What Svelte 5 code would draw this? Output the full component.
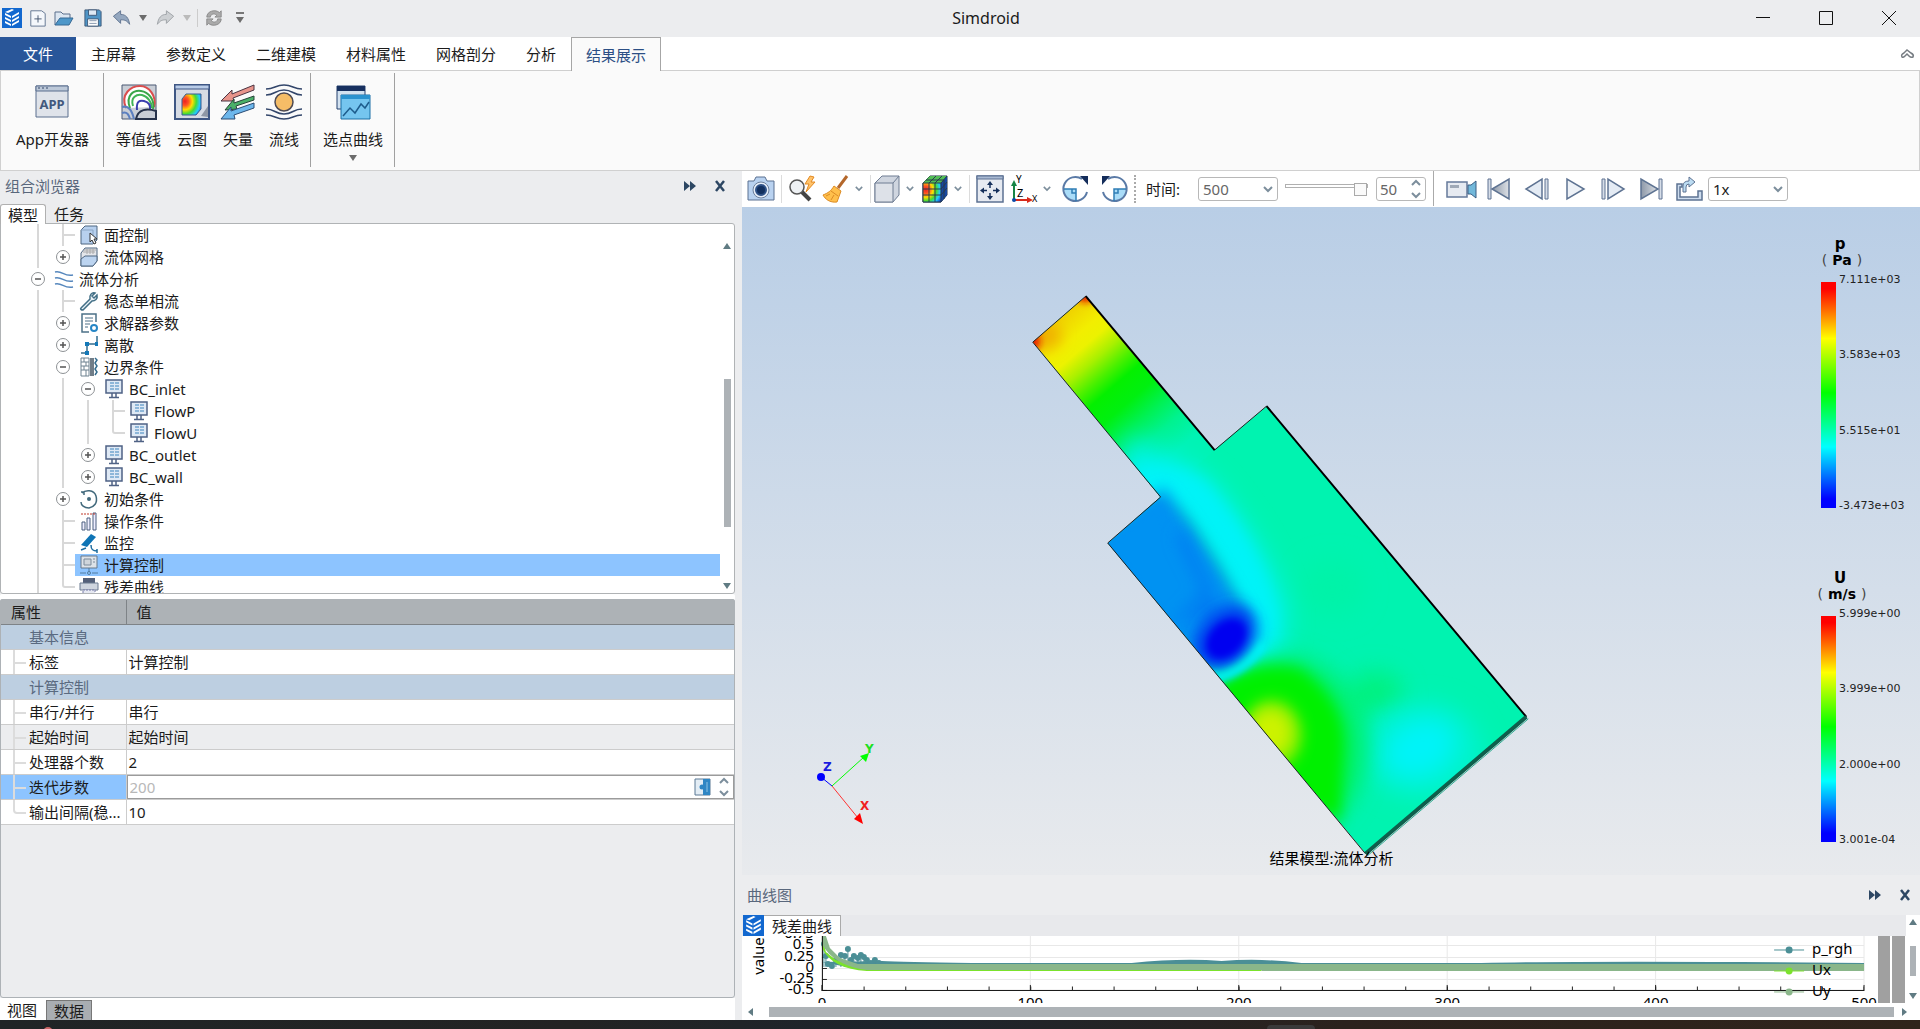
<script>
  const icons = {
    app: `<rect width="20" height="20" fill="#1268cf"/><path d="M3 5l6 3v2L3 7zM3 9l6 3v2l-6-3zM3 13l6 3v2l-6-3zM10 8l7-4v2l-7 4zM10 12l7-4v2l-7 4zM10 16l7-4v2l-7 4zM3 4l7-3 2 1-6 3z" fill="#fff"/>`,
    file: `<path d="M2 2h12l4 3v14H2z" fill="#f4f7fb" stroke="#5b6f8c"/><path d="M10 7v8M6 11h8" stroke="#3c4e69"/>`,
    open: `<path d="M1 17V4h6l2 2h7v4" fill="#dce6f1" stroke="#5b6f8c"/><path d="M1 17l5-7h13l-4 7z" fill="#4d97c9" stroke="#386a95"/>`,
    save: `<path d="M1 1h16l2 2v16H1z" fill="#4f95c6" stroke="#3b5675"/><path d="M5 1h9v6H5z" fill="#dfeaf4" stroke="#3b5675"/><path d="M4 11h12v8H4z" fill="#fff" stroke="#3b5675"/><path d="M6 13h8M6 16h8" stroke="#7d90a8"/>`,
    undo: `<path d="M1 8l8-6v4c6 0 9 4 10 11-3-4-5-5-10-5v4z" fill="#94a7bf" stroke="#5b6f8c"/>`,
    redo: `<path d="M19 8l-8-6v4C5 6 2 10 1 17c3-4 5-5 10-5v4z" fill="#cdd0d3" stroke="#9a9ea3"/>`,
    refresh: `<path d="M2 9c0-7 10-9 14-5l2-2v7h-7l2-2c-3-3-7-1-7 2zM18 11c0 7-10 9-14 5l-2 2v-7h7l-2 2c3 3 7 1 7-2z" fill="#aaa" stroke="#888"/>`,
    more: `<path d="M1 1h8" stroke="#777" stroke-width="2"/><path d="M1 5h8l-4 6z" fill="#6c6c6c"/>`,
    appdev: `<path d="M2 2h32v31H2z" fill="#dfe3ea" stroke="#5a6e8e"/><path d="M2 2h32v5H2z" fill="#bcc8d8" stroke="#5a6e8e"/><path d="M4 4h2M8 4h2M12 4h2" stroke="#34486a"/><text x="18" y="25" text-anchor="middle" font-size="13" font-weight="700" fill="#42597d">APP</text>`,
    contour: `<path d="M1 1h34v34H1z" fill="#c9ced6" stroke="#4a5972"/><g fill="none" stroke-width="2"><path d="M5 24C-1 10 10 2 19 2s17 10 14 21" stroke="#db4d4d" fill="#fff"/><path d="M9 24C4 11 13 6 20 7s14 8 12 18" stroke="#3aa648"/><path d="M12 22C9 13 16 10 21 11s10 7 10 13" stroke="#41b455"/><path d="M16 26c-1-9 3-10 7-9s7 3 6 9" stroke="#3a3fae"/><path d="M1 23c7-2 10 4 12 12M1 29c5-2 7 2 8 6" stroke="#5b7fc0"/><path d="M15 35c2-10 11-11 20-8v8z" fill="#c9ced6" stroke="#26324a"/></g>`,
    cloud: `<path d="M1 1h34v34H1z" fill="#d6dbe4" stroke="#3f5784" stroke-width="2"/><path d="M1 1h34v4H1z" fill="#b9cce8" stroke="#3f5784"/><path d="M27 32l7-10v11z" fill="#8f97a5"/><path d="M8 15l4-5h15v15l-5 6H8z" fill="url(#heat)" stroke="#3a5d90"/>`,
    vector: `<path d="M1 17 12 6v4L34 1v5L13 14l1 3z" fill="#e8948b" stroke="#4b3442"/><path d="M5 26l9-11v4l20-7v4L16 22l1 3z" fill="#49b069" stroke="#28443a"/><path d="M1 35l10-12v4l23-8v5L14 31l1 4z" fill="#6db7ec" stroke="#2d4d75"/>`,
    stream: `<g fill="none" stroke="#33466b" stroke-width="1.5"><path d="M0 5c9 0 9-4 18-4s9 4 18 4M0 11c9 0 9-5 18-5s9 5 18 5M0 25c9 0 9 5 18 5s9-5 18-5M0 31c9 0 9 4 18 4s9-4 18-4"/></g><circle cx="18" cy="18" r="9" fill="#f5bd67" stroke="#4e4a52" stroke-width="1.5"/>`,
    curve: `<path d="M2 2h28v23H2z" fill="#d3e2f0" stroke="#24406e"/><path d="M2 2h28v5H2z" fill="#17305f"/><path d="M6 11h29v24H6z" fill="#75c5ef" stroke="#1b6fa5"/><path d="M6 11h29v4H6z" fill="#2b93cf"/><path d="M8 32l7-8 5 5 6-9 4 4 4-6" fill="none" stroke="#1d5b8b" stroke-width="1.5"/>`,
    face: `<path d="M2 5 6 1h12v14l-4 4H2z" fill="#b7d0ee" stroke="#4f6680"/><path d="M2 5h12v14" fill="none" stroke="#8ba5c4"/><path d="M11 8v9l2-2 2 4 2-1-2-4h3z" fill="#fff" stroke="#333"/>`,
    mesh: `<path d="M2 6 6 1h12v13l-4 5H2z" fill="#e4e6ea" stroke="#4f6680"/><path d="M2 12l4-3h12v5l-4 5H2z" fill="#bcd4f0" stroke="#4f6680"/><path d="M4 5h12M5 3h12M8 2v5M11 2v5M14 2v5" stroke="#aaa"/>`,
    flow: `<path d="M1 3c7-2 9 5 18 3M1 9c7-2 9 5 18 3M1 15c7-2 9 5 18 3" fill="none" stroke="#5687bd" stroke-width="1.5"/>`,
    wrench: `<path d="M2 17 11 8c-1-4 2-7 5-6l-3 3 2 2 3-3c1 4-2 6-5 6l-9 9c-2 0-3-1-2-2z" fill="#e9f1f6" stroke="#426f86" stroke-width="1.5"/>`,
    solver: `<path d="M17 9V1H3v18h7" fill="#fff" stroke="#4c7188" stroke-width="1.5"/><path d="M6 5h8M6 8h8M6 11h5M6 14h3" stroke="#4c7188"/><circle cx="15" cy="15" r="3" fill="#fff" stroke="#2686c6" stroke-width="2"/>`,
    discrete: `<path d="M2 18h6V9h10V1" fill="none" stroke="#336c8e" stroke-width="1.5"/><path d="M6 16h4v4H6zM6 7h4v4H6zM16 7h3v4h-3z" fill="#1579b8"/>`,
    boundary: `<path d="M2 1h8v18H2zM2 5h8M2 9h8M2 13h8M5 1v4M7 5v4M5 9v4M7 13v6" fill="none" stroke="#6f8290"/><path d="M11 1h4v18h-4z" fill="#707d88"/><path d="M16 1l2 2-2 3 2 3-2 3 2 3-2 3" fill="none" stroke="#336c8e" stroke-width="1.5"/>`,
    bc: `<path d="M2 1h16v13H2z" fill="#dfe9f5" stroke="#4f6285" stroke-width="1.5"/><path d="M7 3v9M9 3v9M12 3v9M14 3v9" stroke="#3d84bd" stroke-dasharray="2 1"/><path d="M8 14v4M12 14v4M5 18.5h10" stroke="#4f6285" stroke-width="1.5"/>`,
    initial: `<path d="M3 4C6 1 15 0 17 7s-2 11-7 12c-5 0-8-3-8-6M2 3l3 0 0 3" fill="none" stroke="#42697c" stroke-width="1.5"/><circle cx="10" cy="10" r="2" fill="#42697c"/>`,
    operate: `<path d="M3 11h3v8H3zM8 7h3v12H8zM14 2h3v17h-3z" fill="#eef" stroke="#4b5f7e"/><path d="M2 3h14" stroke="#c0392b" stroke-dasharray="2 1"/>`,
    monitor: `<path d="M2 12 12 1l5 3-9 10z" fill="#0e74b5"/><path d="M2 17l5-2M12 12c0 5 2 6 6 6M18 16v4" fill="none" stroke="#1d6c9f" stroke-width="1.5"/>`,
    compute: `<path d="M2 1h16v12H2z" fill="#dde2e8" stroke="#66788b"/><path d="M5 4h7v6H5zM14 4h2M14 7h2" fill="#cfd5db" stroke="#7c8b9a"/><path d="M10 13v4M1 18h6M13 18h6" stroke="#527d9f"/><circle cx="10" cy="18" r="1.5" fill="none" stroke="#527d9f"/>`,
    residual: `<path d="M4 1h12v5H4z" fill="#536079"/><path d="M1 6h18v7H1z" fill="#cfd6df" stroke="#6b7a90"/><path d="M4 13h12v6H4z" fill="#e6e9f2" stroke="#777ba8" stroke-dasharray="2 1"/>`,
    camera: `<path d="M1 6h6l2-4h9l2 4h7v19H1z" fill="#b9d2f0" stroke="#5b7191"/><circle cx="14" cy="15" r="8" fill="#e6eef8" stroke="#6d809c"/><circle cx="14" cy="15" r="5" fill="#12305f" stroke="#2e5187" stroke-width="2"/>`,
    zoom: `<path d="M14 17l8 8" stroke="#444" stroke-width="4"/><circle cx="9" cy="12" r="7" fill="#eef1f4" stroke="#555" stroke-width="1.5"/><path d="M22 1l-5 8h4l-3 8 9-10h-4l3-5z" fill="#ffc36b" stroke="#e38a22"/>`,
    broom: `<path d="M25 1 16 13" stroke="#b4672b" stroke-width="3"/><path d="M12 11l7 5-4 11C8 28 3 24 1 20c5-2 8-4 11-9z" fill="#ffbf4b" stroke="#dc8b24"/><path d="M9 16l7 5M4 21l4-2M9 25l3-5" stroke="#dc8b24"/>`,
    cube: `<path d="M2 8 9 1h17v19l-6 7H2z" fill="#cfd5df" stroke="#6e7c92"/><path d="M2 8h18v19H2z" fill="#dde1e8" stroke="#6e7c92"/><path d="M20 8l6-7" stroke="#6e7c92"/>`,
    colorcube: `<path d="M2 8 9 1h17v19l-6 7H2z" fill="#126fc7" stroke="#234"/><path d="M2 8h18v19H2z" fill="url(#heat)"/><path d="M2 8 9 1h17l-6 7z" fill="#52bd55"/><path d="M20 8l6-7v19l-6 7z" fill="#17479f"/><path d="M2 8h18v19H2zM2 14h18M2 20h18M8 8v19M14 8v19M8 8l7-7M14 8l7-7M5 5h18M20 8l6-7M20 14l6-7M20 20l6-7M23 5v19" fill="none" stroke="#273b4d"/>`,
    fit: `<path d="M1 1h26v26H1z" fill="#e6eaf1" stroke="#5c7192" stroke-width="1.5"/><path d="M1 1h26v3H1z" fill="#a9bad3" stroke="#5c7192"/><path d="M14 9v4M14 18v4M7 15.5h4M17 15.5h4" stroke="#16305c" stroke-width="1.5"/><path d="M11 10l3-4 3 4zM11 21l3 4 3-4zM8 12.5l-4 3 4 3zM20 12.5l4 3-4 3z" fill="#16305c"/>`,
    axes: `<path d="M4 25V9" stroke="#178545" stroke-width="2"/><path d="M1 11l3-6 3 6z" fill="#178545"/><path d="M4 25h15" stroke="#d92b1c" stroke-width="2"/><path d="M17 22l6 3-6 3z" fill="#d92b1c"/><circle cx="4" cy="25" r="2" fill="#0b4aa8"/><text x="6" y="8" font-size="10">Y</text><text x="7" y="22" font-size="11">Z</text><text x="22" y="27" font-size="9">X</text>`,
    cw: `<path d="M14 14H2a12 12 0 0 0 12 12z" fill="#a9dcf8"/><path d="M25 17A12 12 0 1 1 20 4" fill="none" stroke="#5a7aa6" stroke-width="2"/><path d="M2 14h12v12M10 14v4h4" fill="none" stroke="#2f7db5" stroke-width="1.5"/><path d="M18 1l8 0v9z" fill="#142d5b"/>`,
    ccw: `<path d="M14 14h12a12 12 0 0 1-12 12z" fill="#a9dcf8"/><path d="M3 17A12 12 0 1 0 8 4" fill="none" stroke="#5a7aa6" stroke-width="2"/><path d="M26 14H14v12M18 14v4h-4" fill="none" stroke="#2f7db5" stroke-width="1.5"/><path d="M10 1 2 1v9z" fill="#142d5b"/>`,
    video: `<path d="M0 7h20v15H0z" fill="#e6eaf1" stroke="#667a9a" stroke-width="1.5"/><path d="M3 10h9v3H3z" fill="#9fa9b7"/><path d="M21 10h3l5-4v17l-5-4h-3z" fill="#72b8da" stroke="#3a5e84"/>`,
    first: `<path d="M3 4h3v20H3z" fill="#d6dde8" stroke="#5e7392"/><path d="M24 4v20L7 14z" fill="url(#steel)" stroke="#5e7392" stroke-width="1.5"/>`,
    prev: `<path d="M19 4v20L3 14z" fill="#e4ebf4" stroke="#5e7392" stroke-width="1.5"/><path d="M22 4h3v20h-3z" fill="#d6dde8" stroke="#5e7392"/>`,
    play: `<path d="M6 4v20L23 14z" fill="#eef2f7" stroke="#5e7392" stroke-width="1.5"/>`,
    next: `<path d="M9 4v20L25 14z" fill="#e4ebf4" stroke="#5e7392" stroke-width="1.5"/><path d="M3 4h3v20H3z" fill="#d6dde8" stroke="#5e7392"/>`,
    last: `<path d="M22 4h3v20h-3z" fill="#d6dde8" stroke="#5e7392"/><path d="M4 4v20L21 14z" fill="url(#steel)" stroke="#5e7392" stroke-width="1.5"/>`,
    loop: `<path d="M2 9h5v3H5v10h18v-6h4v9H2z" fill="#cddcee" stroke="#5e7392" stroke-width="1.5"/><path d="M8 17V11q0-5 6-5V2l6 5-6 5V9q-3 0-3 3v5z" fill="#bcdcf2" stroke="#5e7392"/>`,
    forward: `<path d="M1 1l6 5-6 5zM7 1l6 5-6 5z" fill="#2d4763"/>`,
    close: `<path d="M2 1l8 10M10 1 2 11" stroke="#2d4763" stroke-width="2.5"/>`,
    chevron: `<path d="M1 1l4 4 4-4" fill="none" stroke="#7c8e9c" stroke-width="2"/>`,
    chevronUp: `<path d="M1 5l4-4 4 4" fill="none" stroke="#7c8e9c" stroke-width="2"/>`,
    up: `<path d="M0 6l4-6 4 6z" fill="#607b83"/>`,
    down: `<path d="M0 0l4 6 4-6z" fill="#607b83"/>`,
    left: `<path d="M6 0v8L1 4z" fill="#607b83"/>`,
    right: `<path d="M0 0v8l5-4z" fill="#607b83"/>`,
    minimize: `<path d="M0 6.5h14" stroke="#111"/>`,
    maximize: `<path d="M.5.5h13v13H.5z" fill="none" stroke="#111"/>`,
    quit: `<path d="M0 0l14 14M14 0 0 14" stroke="#111"/>`,
    collapse: `<path d="M1 9c-1-2 0-3 2-4l3-3 4 3c2 1 3 2 2 4-2 1-3 0-4-1L6 6 4 8C3 9 2 10 1 9z" fill="none" stroke="#777d83" stroke-width="1.5"/>`,
    param: `<path d="M1 1h15v16H1z" fill="#e3edf5" stroke="#5a7894"/><path d="M9 1h7v16H9z" fill="#2f86c4"/><circle cx="8" cy="9" r="2.5" fill="#2f86c4"/><path d="M13 4v10" stroke="#8cc3e6"/>`
  };

  const tabs = ['主屏幕', '参数定义', '二维建模', '材料属性', '网格剖分', '分析', '结果展示'];

  // guides: | line, t branch, l last branch, + closed, - open
  const tree = [
    { guides: '|t', icon: 'face', label: '面控制' },
    { guides: '|+', icon: 'mesh', label: '流体网格' },
    { guides: '-', icon: 'flow', label: '流体分析' },
    { guides: '|t', icon: 'wrench', label: '稳态单相流' },
    { guides: '|+', icon: 'solver', label: '求解器参数' },
    { guides: '|+', icon: 'discrete', label: '离散' },
    { guides: '|-', icon: 'boundary', label: '边界条件' },
    { guides: '||-', icon: 'bc', label: 'BC_inlet' },
    { guides: '|||t', icon: 'bc', label: 'FlowP' },
    { guides: '|||l', icon: 'bc', label: 'FlowU' },
    { guides: '||+', icon: 'bc', label: 'BC_outlet' },
    { guides: '||+', icon: 'bc', label: 'BC_wall' },
    { guides: '|+', icon: 'initial', label: '初始条件' },
    { guides: '|t', icon: 'operate', label: '操作条件' },
    { guides: '|t', icon: 'monitor', label: '监控' },
    { guides: '|t', icon: 'compute', label: '计算控制' },
    { guides: '|l', icon: 'residual', label: '残差曲线' }
  ];
  let selected = $state('计算控制');

  const props = [
    { group: '基本信息' },
    { name: '标签', value: '计算控制' },
    { group: '计算控制' },
    { name: '串行/并行', value: '串行' },
    { name: '起始时间', value: '起始时间', shaded: true },
    { name: '处理器个数', value: '2' },
    { name: '迭代步数', value: '200', edit: true },
    { name: '输出间隔(稳...', value: '10', last: true }
  ];

  const legends = [
    { name: 'p', unit: 'Pa', ticks: ['7.111e+03', '3.583e+03', '5.515e+01', '-3.473e+03'] },
    { name: 'U', unit: 'm/s', ticks: ['5.999e+00', '3.999e+00', '2.000e+00', '3.001e-04'] }
  ];

  const player = [
    ['video', '录制'],
    ['first', '第一帧'],
    ['prev', '上一帧'],
    ['play', '播放'],
    ['next', '下一帧'],
    ['last', '最后一帧'],
    ['loop', '循环']
  ];

  const yTicks = [
    { y: -2, text: '0.75' },
    { y: 9, text: '0.5' },
    { y: 21, text: '0.25' },
    { y: 32, text: '0' },
    { y: 43, text: '-0.25' },
    { y: 54, text: '-0.5' }
  ];
  const xTicks = [0, 100, 200, 300, 400, 500];
  const series = [
    { name: 'p_rgh', color: '#4b8f96', y: 14 },
    { name: 'Ux', color: '#7be22c', y: 35 },
    { name: 'Uy', color: '#8ab68a', y: 56 }
  ];
  // early p_rgh iterations, before the residual settles
  const noise = [
    [82, 8], [84, 20], [86, 28], [90, 30], [94, 24], [99, 19], [103, 20], [106, 13],
    [109, 24], [112, 20], [116, 22], [119, 19], [122, 21], [125, 24], [129, 27], [133, 24], [137, 27]
  ];
</script>

{#snippet icon(name, w, h = w, box = `0 0 ${w} ${h}`)}
  <svg class="icon" width={w} height={h} viewBox={box} aria-hidden="true">{@html icons[name]}</svg>
{/snippet}

{#snippet tool(name, label)}
  <button class="tool" aria-label={label}>{@render icon(name, 28)}</button>
{/snippet}

{#snippet menuTool(name, label)}
  <button class="tool menu" aria-label={label}>
    <span class="face">{@render icon(name, 28)}</span>
    {@render icon('chevron', 8, 5, '0 0 10 6')}
  </button>
{/snippet}

{#snippet ribbon(name, label)}
  <button class="big">{@render icon(name, 36)}<span>{label}</span></button>
{/snippet}

{#snippet dockTitle(text)}
  <header class="dock-title">
    <h2>{text}</h2>
    <button aria-label="展开">{@render icon('forward', 14, 12)}</button>
    <button aria-label="关闭">{@render icon('close', 12)}</button>
  </header>
{/snippet}

<svg class="defs" width="0" height="0" aria-hidden="true">
  <defs>
    <radialGradient id="heat" cx=".15" cy=".35" r="1">
      <stop offset="0" stop-color="#e22" /><stop offset=".2" stop-color="#f52" /><stop offset=".4" stop-color="#fd0" />
      <stop offset=".6" stop-color="#4d3" /><stop offset=".8" stop-color="#2cf" /><stop offset="1" stop-color="#14c" />
    </radialGradient>
    <linearGradient id="steel"><stop offset="0" stop-color="#8d98a8" /><stop offset="1" stop-color="#dde1e6" /></linearGradient>
  </defs>
</svg>

<div class="window">
  <header class="titlebar">
    <div class="quick">
      {@render icon('app', 20)}
      <button aria-label="新建">{@render icon('file', 18, 18, '0 0 20 20')}</button>
      <button aria-label="打开">{@render icon('open', 20)}</button>
      <button class="split" aria-label="保存">{@render icon('save', 18, 18, '0 0 20 20')}</button>
      <button class="split" aria-label="撤销">{@render icon('undo', 19, 18, '0 0 20 20')}<i class="caret"></i></button>
      <button class="split off" aria-label="重做">{@render icon('redo', 19, 18, '0 0 20 20')}<i class="caret"></i></button>
      <span class="bar"></span>
      <button aria-label="刷新">{@render icon('refresh', 18, 18, '0 0 20 20')}</button>
      <button aria-label="更多">{@render icon('more', 10, 12)}</button>
    </div>
    <h1>Simdroid</h1>
    <div class="controls">
      <button aria-label="最小化">{@render icon('minimize', 14)}</button>
      <button aria-label="最大化">{@render icon('maximize', 14)}</button>
      <button aria-label="退出">{@render icon('quit', 14)}</button>
    </div>
  </header>

  <nav class="tabs">
    <button class="file">文件</button>
    {#each tabs as tab}
      <button class:active={tab === '结果展示'}>{tab}</button>
    {/each}
    <button class="collapse" aria-label="折叠">{@render icon('collapse', 13, 11)}</button>
  </nav>

  <section class="ribbon">
    <div class="group wide">{@render ribbon('appdev', 'App开发器')}</div>
    <div class="group">
      {@render ribbon('contour', '等值线')}
      {@render ribbon('cloud', '云图')}
      {@render ribbon('vector', '矢量')}
      {@render ribbon('stream', '流线')}
    </div>
    <div class="group">
      <button class="big">{@render icon('curve', 36)}<span>选点曲线</span><i class="caret"></i></button>
    </div>
  </section>

  <main>
    <aside>
      {@render dockTitle('组合浏览器')}
      <div class="side-tabs">
        <button class="active">模型</button>
        <button>任务</button>
      </div>
      <div class="tree">
        <ul>
          {#each tree as row}
            <li>
              {#each row.guides as g}
                {#if g === '+' || g === '-'}
                  <button class="toggle" aria-label={g === '+' ? '展开' : '收起'}>
                    <svg width="14" height="14" viewBox="0 0 14 14">
                      <circle cx="7" cy="7" r="6.5" fill="#fff" stroke="#8d9194" />
                      <path d={g === '+' ? 'M4 7h6M7 4v6' : 'M4 7h6'} stroke="#555" stroke-width="1.5" />
                    </svg>
                  </button>
                {:else}
                  <svg class="guide" width="25" height="22" viewBox="0 0 25 22">
                    <path d={g === '|' ? 'M13 0v22' : g === 't' ? 'M13 0v22M13 11h12' : 'M13 0v9q0 2 2 2h10'} fill="none" stroke="#d8d8d8" stroke-width="2" />
                  </svg>
                {/if}
              {/each}
              <button class="node" class:selected={selected === row.label} onclick={() => (selected = row.label)}>
                {@render icon(row.icon, 20)}{row.label}
              </button>
            </li>
          {/each}
        </ul>
        <div class="vscroll">
          {@render icon('up', 8, 6)}
          <i></i>
          {@render icon('down', 8, 6)}
        </div>
      </div>

      <div class="props">
        <table>
          <thead><tr><th>属性</th><th>值</th></tr></thead>
          <tbody>
            {#each props as p}
              {#if p.group}
                <tr class="section"><td colspan="2">{p.group}</td></tr>
              {:else}
                <tr class:shaded={p.shaded} class:edit={p.edit}>
                  <th scope="row">
                    <div class="name">
                      <svg width="25" height="25" viewBox="0 0 25 25">
                        <path d={p.last ? 'M13 0v10q0 3 3 3h9' : 'M13 0v25M13 13h12'} fill="none" stroke="#dcdcdc" stroke-width="2" />
                      </svg>
                      {p.name}
                    </div>
                  </th>
                  <td>
                    {#if p.edit}
                      <div class="field">
                        <input type="text" aria-label={p.name} value={p.value} disabled />
                        {@render icon('param', 17, 18)}
                        <div class="spin">
                          <button aria-label="增加">{@render icon('chevronUp', 10, 6)}</button>
                          <button aria-label="减少">{@render icon('chevron', 10, 6)}</button>
                        </div>
                      </div>
                    {:else}
                      {p.value}
                    {/if}
                  </td>
                </tr>
              {/if}
            {/each}
          </tbody>
        </table>
      </div>
      <div class="foot-tabs">
        <button>视图</button>
        <button class="active">数据</button>
      </div>
    </aside>

    <div class="work">
      <div class="toolbar">
        {@render tool('camera', '截图')}
        <span class="sep"></span>
        {@render tool('zoom', '快速缩放')}
        {@render menuTool('broom', '清除')}
        <span class="sep"></span>
        {@render menuTool('cube', '显示')}
        {@render menuTool('colorcube', '着色')}
        <span class="sep"></span>
        {@render tool('fit', '适应窗口')}
        {@render menuTool('axes', '视角')}
        {@render tool('cw', '顺时针')}
        {@render tool('ccw', '逆时针')}
        <span class="sep dotted"></span>
        <label class="time" for="time">时间:</label>
        <div class="combo pale">
          <select id="time"><option>500</option></select>
          {@render icon('chevron', 10, 6)}
        </div>
        <input class="slider" type="range" aria-label="帧" min="0" max="50" value="50" />
        <div class="number">
          <input type="text" aria-label="帧数" value="50" />
          <div class="spin">
            <button aria-label="增加">{@render icon('chevronUp', 10, 6)}</button>
            <button aria-label="减少">{@render icon('chevron', 10, 6)}</button>
          </div>
        </div>
        <span class="sep tall"></span>
        {#each player as [name, label]}
          {@render tool(name, label)}
        {/each}
        <div class="combo">
          <select aria-label="速度"><option>1x</option></select>
          {@render icon('chevron', 10, 6)}
        </div>
      </div>

      <div class="viewport">
        <svg class="scene" viewBox="0 0 1179 668">
          <defs>
            <clipPath id="body">
              <path d="M238 68 90 188 447 593 300 714 1022 1525 1472 1168 746 355 598 470z" />
            </clipPath>
            <linearGradient id="channel" gradientUnits="userSpaceOnUse" x1="164" y1="128" x2="528" y2="580">
              <stop offset="0" stop-color="#f0d200" /><stop offset=".11" stop-color="#f2ee00" />
              <stop offset=".17" stop-color="#ecf200" /><stop offset=".25" stop-color="#a8f000" />
              <stop offset=".33" stop-color="#4cf000" /><stop offset=".4" stop-color="#04f000" />
              <stop offset=".5" stop-color="#00f010" /><stop offset=".6" stop-color="#00f154" />
              <stop offset=".7" stop-color="#00f290" /><stop offset=".82" stop-color="#00f3b4" />
              <stop offset="1" stop-color="#00f3b4" />
            </linearGradient>
            <filter id="soft" x="-60%" y="-60%" width="220%" height="220%"><feGaussianBlur stdDeviation="32" /></filter>
            <filter id="mid" x="-60%" y="-60%" width="220%" height="220%"><feGaussianBlur stdDeviation="20" /></filter>
            <filter id="fine" x="-60%" y="-60%" width="220%" height="220%"><feGaussianBlur stdDeviation="10" /></filter>
          </defs>
          <g transform="translate(259 63) scale(.3571 .3827)">
            <g clip-path="url(#body)">
              <path d="M0 0h1568v1568H0z" fill="#00f3b0" />
              <path d="M238 68 90 188 447 593 600 470z" fill="url(#channel)" />
              <ellipse cx="120" cy="170" rx="50" ry="34" fill="#f0b000" filter="url(#mid)" />
              <circle cx="84" cy="186" r="26" fill="#e81800" filter="url(#fine)" />
              <ellipse cx="238" cy="64" rx="28" ry="20" fill="#e81800" filter="url(#fine)" />
              <ellipse cx="930" cy="830" rx="90" ry="70" fill="#00f3a8" filter="url(#soft)" />
              <ellipse cx="1050" cy="1110" rx="80" ry="60" fill="#00f180" filter="url(#soft)" />
              <ellipse cx="1180" cy="1255" rx="175" ry="125" fill="#00f3cc" filter="url(#soft)" />
              <ellipse cx="1175" cy="1250" rx="105" ry="75" fill="#00f3f8" filter="url(#soft)" transform="rotate(-20 1175 1250)" />
              <path d="M340 510q120 30 210 90 140 150 190 300 0 120-120 210" fill="none" stroke="#00f3e0" stroke-width="140" filter="url(#soft)" />
              <path d="M380 556q110-10 170 40 140 150 180 310 0 100-100 160" fill="none" stroke="#00f3f8" stroke-width="90" filter="url(#mid)" />
              <ellipse cx="790" cy="1250" rx="235" ry="240" fill="#00f168" filter="url(#soft)" />
              <path d="M620 1100q110-60 210-38 120 80 110 195l-10 150-110-60z" fill="#00f000" stroke="#00f000" stroke-width="44" filter="url(#mid)" />
              <ellipse cx="760" cy="1215" rx="85" ry="90" fill="#80f000" filter="url(#mid)" />
              <ellipse cx="755" cy="1210" rx="58" ry="62" fill="#ccf200" filter="url(#mid)" />
              <path d="M455 580 250 740 560 1020 650 1010 685 900 600 770 530 670z" fill="#0092f2" stroke="#0092f2" stroke-width="16" filter="url(#mid)" />
              <path d="M445 600 290 714 500 950 560 920 560 840 470 680z" fill="#0092f2" filter="url(#fine)" />
              <path d="M500 690l80 150-60 60 90-20" fill="#0080f2" stroke="#0080f2" stroke-width="30" filter="url(#mid)" />
              <ellipse cx="630" cy="962" rx="98" ry="72" fill="#0038f0" filter="url(#mid)" transform="rotate(-40 630 962)" />
              <ellipse cx="632" cy="964" rx="62" ry="44" fill="#0000f0" filter="url(#fine)" transform="rotate(-40 632 964)" />
              <path d="M545 1056 610 1066q80-20 128-90" fill="none" stroke="#00f3f8" stroke-width="22" filter="url(#fine)" />
            </g>
          </g>
          <path d="M344 89 291 135 419 290 366 336 624 647M473 243l52-44" fill="none" stroke="#222" />
          <path d="M344 89 473 243M525 199 785 510" fill="none" stroke="#000" stroke-width="2" />
          <path d="M785 510 624 647" stroke="#0e5f4c" stroke-width="4" />
          <path d="M787 512 626 649" stroke="#2fae92" />
          <text x="590" y="657" text-anchor="middle" font-size="15">结果模型:流体分析</text>
        </svg>

        <svg class="triad" width="130" height="130" viewBox="0 0 130 130">
          <path d="M52 66 41 57" stroke="#00f" /><circle cx="41" cy="57" r="4" fill="#00f" />
          <path d="M52 66 84 37" stroke="#0f0" /><path d="M89 33l-9 3 6 6z" fill="#0f0" />
          <path d="M52 66 78 98" stroke="#f33" /><path d="M83 104l-9-5 6-6z" fill="#f00" />
          <text x="43" y="51" fill="#1a1ae0">Z</text>
          <text x="85" y="33" fill="#1fe01f">Y</text>
          <text x="80" y="90" fill="#f02020">X</text>
        </svg>

        <div class="legends">
          {#each legends as l}
            <div class="legend">
              <b>{l.name}</b>
              <span class="unit">( <b>{l.unit}</b> )</span>
              <div class="scale">
                <i></i>
                <ol>{#each l.ticks as t}<li>{t}</li>{/each}</ol>
              </div>
            </div>
          {/each}
        </div>
      </div>

      <section class="curves">
        {@render dockTitle('曲线图')}
        <div class="curve-body">
          <div class="sheet">
            <div class="sheet-tabs">{@render icon('app', 21, 21, '0 0 20 20')}<button>残差曲线</button></div>
            <div class="plot">
              <svg viewBox="0 0 1165 67" preserveAspectRatio="xMinYMin meet">
                {#each yTicks as t}
                  <path d="M80 {t.y + .5}h1043" stroke="#e8e8e8" />
                  <path d="M80 {t.y + .5}h5" stroke="#222" />
                  <text x="72" y={t.y + 4} text-anchor="end">{t.text}</text>
                {/each}
                {#each xTicks as t, i}
                  <path d="M{80 + i * 208.6} 0v54" stroke="#e8e8e8" />
                  <path d="M{80 + i * 208.6} 49v6" stroke="#222" />
                  <text x={80 + i * 208.6} y="72" text-anchor="middle">{t}</text>
                {/each}
                <path d="M80 26 140 25Q160 26 230 27H390Q440 22 480 25 520 22 560 27H740Q830 25 1000 26L1123 27V34H120z" fill="#4b8f96" />
                {#each noise as [x, y]}
                  <path d="M{x} {y}V31" stroke="#4b8f96" /><circle cx={x} cy={y} r="3" fill="#4b8f96" />
                {/each}
                <path d="M80 2l4 14 10 8 20 5H520v6H125Q90 33 80 12z" fill="#7be22c" />
                <path d="M80 0h4l4 12 10 10 18 6H1123v7H520v-1H125Q92 30 80 8z" fill="#8ab68a" />
                <path d="M80.5 0v55M80 54.5h1043" stroke="#111" />
                <path d="M80 52.5h1043" stroke="#222" stroke-width="4" stroke-dasharray="1 40.7" />
                <text class="axis" transform="translate(22 20) rotate(-90)" text-anchor="middle">value</text>
                {#each series as s}
                  <path d="M1033 {s.y}h30" stroke={s.color} /><circle cx="1048" cy={s.y} r="3.5" fill={s.color} />
                  <text x="1071" y={s.y + 4}>{s.name}</text>
                {/each}
              </svg>
              <i class="edge"></i>
            </div>
          </div>
          <div class="vscroll">
            {@render icon('up', 8, 6)}
            <i></i>
            {@render icon('down', 8, 6)}
          </div>
        </div>
        <div class="hscroll">
          {@render icon('left', 6, 8)}
          <i></i>
          {@render icon('right', 6, 8)}
        </div>
      </section>
    </div>
  </main>
  <footer><i class="badge"></i><i class="pill"></i></footer>
</div>

<style>
  :global(body) {
    background: #ecedef;
  }
  .window {
    display: flex;
    flex-direction: column;
    height: 100vh;
    min-height: 900px;
    overflow: hidden;
    background: #ecedef;
    color: #1b1b1b;
    font: 15px/22px 'Noto Sans', 'Noto Sans CJK SC', sans-serif;
  }
  .window * {
    box-sizing: border-box;
  }
  button,
  input,
  select {
    margin: 0;
    padding: 0;
    border: 0;
    background: none;
    color: inherit;
    font: inherit;
  }
  h1,
  h2 {
    margin: 0;
    font-size: 15px;
    font-weight: 400;
  }
  ul,
  ol {
    margin: 0;
    padding: 0;
    list-style: none;
  }
  .defs {
    position: absolute;
  }
  .icon {
    display: block;
    flex: none;
    overflow: visible;
  }
  .caret {
    border: 4px solid transparent;
    border-top: 6px solid #6c6c6c;
    border-bottom: 0;
  }

  .titlebar {
    display: grid;
    grid-template-columns: 1fr auto 1fr;
    align-items: center;
    height: 37px;
    padding-bottom: 1px;
    flex: none;
  }
  .quick {
    display: flex;
    align-items: center;
    gap: 6px;
    padding-left: 2px;
  }
  .quick button {
    display: flex;
    justify-content: center;
    min-width: 20px;
  }
  .quick .split {
    align-items: center;
    gap: 8px;
    margin-left: 3px;
  }
  .off .caret {
    border-top-color: #bbb;
  }
  .bar {
    width: 1px;
    height: 18px;
    background: #ccc;
  }
  h1 {
    margin-left: 52px;
    font-size: 16px;
  }
  .controls {
    display: flex;
    justify-content: flex-end;
  }
  .controls button {
    display: grid;
    place-items: center;
    width: 63px;
    height: 36px;
  }

  .tabs {
    display: flex;
    flex: none;
    height: 34px;
    background: #fff;
    border-bottom: 1px solid #cfcfcf;
  }
  .tabs button {
    padding: 0 15px;
  }
  .tabs .file {
    width: 76px;
    background: #295699;
    color: #fff;
  }
  .tabs .active {
    margin-bottom: -1px;
    border: 1px solid #a6a6a6;
    border-bottom: 0;
    padding: 0 14px;
    background: #fafafa;
    color: #2c4f85;
  }
  .tabs .collapse {
    margin-left: auto;
    padding: 0 6px;
  }

  .ribbon {
    display: flex;
    flex: none;
    height: 100px;
    padding: 2px 0 3px;
    background: #fafafa;
    border: 1px solid #d0d0d0;
    border-top: 0;
  }
  .group {
    display: flex;
    justify-content: center;
    padding: 0 3px 0 4px;
    border-right: 1px solid #a0a0a0;
  }
  .group.wide {
    width: 103px;
  }
  .big {
    display: flex;
    flex-direction: column;
    align-items: center;
    padding: 11px 8px 0;
    white-space: nowrap;
  }
  .big .icon {
    margin: 0 -4px;
  }
  .big span {
    margin-top: 8px;
  }
  .big .caret {
    margin-top: 5px;
  }

  main {
    display: grid;
    grid-template-columns: minmax(0, 735fr) minmax(0, 1178fr);
    gap: 7px;
    flex: 1;
    min-height: 0;
  }
  aside,
  .work {
    display: flex;
    flex-direction: column;
    min-height: 0;
  }
  .dock-title {
    display: flex;
    align-items: center;
    flex: none;
    height: 33px;
    padding: 0 8px 3px 5px;
    color: #59677c;
  }
  .dock-title h2 {
    flex: 1;
  }
  .dock-title button {
    display: grid;
    place-items: center;
    width: 30px;
    height: 24px;
  }
  .dock-title button:last-child {
    width: 14px;
    margin-left: 8px;
  }
  .side-tabs {
    display: flex;
    flex: none;
    height: 19px;
    line-height: 18px;
  }
  .side-tabs button {
    padding: 0 8px;
  }
  .side-tabs .active {
    margin-bottom: -1px;
    border: 1px solid #b0b0b0;
    border-bottom: 0;
    border-radius: 3px 3px 0 0;
    padding: 0 7px;
    background: #fff;
    z-index: 1;
  }
  .tree {
    display: flex;
    flex: 371 1 0;
    min-height: 0;
    margin-bottom: 5px;
    overflow: hidden;
    border: 1px solid #b0b3b5;
    border-radius: 0 3px 3px 3px;
    background: #fff;
  }
  .tree ul {
    flex: 1;
    padding-left: 24px;
  }
  .tree li {
    display: flex;
    height: 22px;
  }
  .toggle {
    display: grid;
    place-items: center;
    width: 25px;
    flex: none;
  }
  .guide {
    flex: none;
  }
  .node {
    display: flex;
    align-items: center;
    gap: 5px;
    flex: 1;
    padding-left: 4px;
    line-height: 20px;
  }
  .node.selected {
    background: #8dc4ff;
  }
  .vscroll {
    display: flex;
    flex-direction: column;
    align-items: center;
    flex: none;
  }
  .tree .vscroll {
    width: 14px;
    padding: 19px 0 4px;
  }
  .tree .vscroll i {
    width: 7px;
    height: 148px;
    margin: auto 0 56px;
    background: #adb2b6;
  }
  .props {
    flex: 400 1 0;
    min-height: 0;
    border: 1px solid #adb2b6;
    border-radius: 2px 2px 3px 3px;
    box-shadow: 0 -5px #fff;
  }
  table {
    width: 100%;
    border-collapse: collapse;
    table-layout: fixed;
    background: #fff;
  }
  th,
  td {
    height: 25px;
    padding: 0;
    border-bottom: 1px solid #ccc;
    font-weight: 400;
    text-align: left;
    line-height: 22px;
    white-space: nowrap;
  }
  th {
    width: 125px;
    border-right: 1px solid #ccc;
  }
  td {
    padding-left: 2px;
  }
  thead th {
    padding-left: 10px;
    background: #adb2b6;
    border-color: #7e8387;
  }
  thead th:last-child {
    width: auto;
    border-right: 0;
  }
  .section td {
    padding-left: 28px;
    background: #bdcfe1;
    color: #5a6a80;
  }
  .name {
    display: flex;
    align-items: center;
    gap: 3px;
    height: 24px;
    overflow: hidden;
  }
  .shaded {
    background: #ecedef;
  }
  .edit th {
    background: #8dc4ff;
  }
  .edit td {
    padding: 0;
  }
  .field {
    display: flex;
    align-items: center;
    gap: 8px;
    height: 24px;
    padding: 0 4px 0 2px;
    border: 1px solid #9b9b9b;
  }
  .field input {
    flex: 1;
    min-width: 0;
    color: #b8b8b8;
  }
  .spin {
    display: flex;
    flex-direction: column;
    justify-content: space-between;
    height: 20px;
    padding: 1px 0;
  }
  .spin button {
    line-height: 0;
  }
  .foot-tabs {
    display: flex;
    align-items: flex-start;
    gap: 2px;
    flex: none;
    height: 22px;
    padding-top: 2px;
    overflow: hidden;
    background: #fff;
  }
  .foot-tabs button {
    height: 20px;
    padding: 0 7px;
    line-height: 20px;
  }
  .foot-tabs .active {
    border: 1px solid #777;
    border-bottom: 0;
    background: #a9adb1;
  }

  .toolbar {
    display: flex;
    align-items: center;
    flex: none;
    height: 36px;
    padding-bottom: 1px;
    background: #fff;
  }
  .tool {
    display: grid;
    place-items: center;
    flex: none;
    width: 38px;
    height: 35px;
  }
  .tool.menu {
    display: flex;
    width: 48px;
  }
  .face {
    width: 34px;
    padding-left: 1px;
  }
  .sep {
    flex: none;
    width: 1px;
    height: 28px;
    margin: 0 1px;
    background: #dcdcdc;
  }
  .sep.dotted {
    width: 0;
    border-left: 2px dotted #aaa;
    background: none;
  }
  .sep.tall {
    height: 35px;
    margin: 0 8px 0 7px;
    background: #aaa;
  }
  .time {
    flex: none;
    width: 61px;
    padding-left: 9px;
  }
  .combo {
    position: relative;
    flex: none;
    width: 80px;
    height: 24px;
    border: 1px solid #b8b8b8;
    border-radius: 3px;
  }
  .pale,
  .number {
    color: #666;
  }
  .combo select {
    width: 100%;
    height: 22px;
    padding-left: 4px;
    appearance: none;
  }
  .combo .icon {
    position: absolute;
    top: 8px;
    right: 4px;
    pointer-events: none;
  }
  .slider {
    flex: none;
    width: 83px;
    height: 14px;
    margin: 0 8px 0 7px;
    appearance: none;
  }
  .slider::-webkit-slider-runnable-track {
    height: 4px;
    margin-bottom: 6px;
    border: 1px solid #b0b0b0;
    background: #fff;
  }
  .slider::-webkit-slider-thumb {
    width: 13px;
    height: 13px;
    margin-top: -2px;
    appearance: none;
    border: 1px solid #aaa;
    background: #fafafa;
  }
  .number {
    display: flex;
    align-items: center;
    flex: none;
    width: 50px;
    height: 24px;
    padding: 0 4px 0 3px;
    border: 1px solid #b8b8b8;
    border-radius: 3px;
  }
  .number input {
    flex: 1;
    min-width: 0;
  }

  .viewport {
    position: relative;
    flex: 1;
    min-height: 0;
    overflow: hidden;
    background: linear-gradient(#b9cee6, #e8eaed);
  }
  .scene {
    display: block;
    width: 100%;
    height: 100%;
  }
  .triad {
    position: absolute;
    left: 38px;
    bottom: 25px;
    font: 700 12px 'DejaVu Sans', sans-serif;
  }
  .legends {
    position: absolute;
    top: 28px;
    right: 5px;
    display: grid;
    gap: 61px;
    width: 94px;
    color: #000;
  }
  .legend {
    display: grid;
    justify-items: start;
    grid-template-rows: 18px 15px auto;
    font: 15px/18px 'DejaVu Sans', sans-serif;
  }
  .legend > b {
    width: 38px;
    text-align: center;
  }
  .unit {
    display: flex;
    justify-content: center;
    gap: 5px;
    width: 42px;
    font-size: 14px;
    line-height: 14px;
    color: #444;
  }
  .unit b {
    color: #000;
  }
  .scale {
    display: flex;
    gap: 3px;
    margin-top: 14px;
  }
  .scale i {
    width: 15px;
    height: 226px;
    background: linear-gradient(#f00 3%, #f60 12%, #ff0 25%, #0f0 49%, #0ff 73%, #00f 96%);
  }
  .scale ol {
    display: flex;
    flex-direction: column;
    justify-content: space-between;
    height: 240px;
    margin: -9px 0 -5px;
    font-size: 11px;
    line-height: 14px;
    color: #222;
  }

  .curves {
    flex: none;
  }
  .curves .dock-title {
    height: 40px;
    padding-bottom: 0;
  }
  .curve-body {
    display: flex;
    background: #fff;
  }
  .sheet {
    flex: 1;
    min-width: 0;
  }
  .sheet-tabs {
    display: flex;
    height: 21px;
    padding-left: 1px;
    background: #e8e9ec;
  }
  .sheet-tabs button {
    width: 77px;
    border: 1px solid #aaa;
    border-width: 1px 1px 0 0;
    background: #fff;
    line-height: 18px;
  }
  .plot {
    display: flex;
    position: relative;
    height: 67px;
    overflow: hidden;
  }
  .plot svg {
    width: 100%;
    height: 67px;
    color: #222;
  }
  .edge {
    position: absolute;
    right: 1px;
    width: 27px;
    height: 67px;
    background: linear-gradient(90deg, #a0a0a0 12px, #fff 12px 14px, #a0a0a0 14px);
  }
  .curve-body .vscroll {
    width: 14px;
    padding: 4px 0;
  }
  .curve-body .vscroll i {
    width: 6px;
    height: 30px;
    margin: auto 0 17px;
    background: #adb2b6;
  }
  .hscroll {
    display: flex;
    align-items: center;
    gap: 16px;
    height: 17px;
    padding: 0 12px 0 5px;
    background: #fff;
  }
  .hscroll i {
    flex: 1;
    height: 10px;
    background: #adb2b6;
  }
  .hscroll .icon:last-child {
    margin-left: -8px;
  }
  footer {
    position: relative;
    flex: none;
    height: 9px;
    overflow: hidden;
    background: linear-gradient(90deg, #202426, #232323 30%, #1d252d 47%, #2b221d 70%, #30241b);
  }
  .badge,
  .pill {
    position: absolute;
    left: 43px;
    top: 7px;
    width: 10px;
    height: 10px;
    border-radius: 50%;
    background: #c66;
  }
  .pill {
    left: 66%;
    top: 5px;
    width: 48px;
    border-radius: 4px;
    background: #3a3a3a;
  }
</style>
